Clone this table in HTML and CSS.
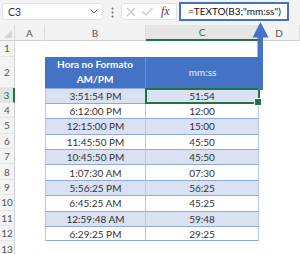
FILE: index.html
```html
<!DOCTYPE html>
<html>
<head>
<meta charset="utf-8">
<link rel="stylesheet" href="styles.css">
</head>
<body>
<div class="app">
  <div class="topbar">
    <div class="namebox">
      <span class="nb-text">C3</span>
      <svg class="chev" width="8" height="5" viewBox="0 0 8 5"><path d="M0.5 0.5 L4 4 L7.5 0.5" fill="none" stroke="#555" stroke-width="1"/></svg>
    </div>
    <svg class="dots" width="3" height="11" viewBox="0 0 3 11"><circle cx="1.5" cy="1.5" r="1" fill="#666"/><circle cx="1.5" cy="5.5" r="1" fill="#666"/><circle cx="1.5" cy="9.5" r="1" fill="#666"/></svg>
    <div class="fxbox">
      <svg class="ico" width="10" height="10" viewBox="0 0 10 10"><path d="M1 1 L9 9 M9 1 L1 9" stroke="#c4c4c4" stroke-width="1.1" fill="none"/></svg>
      <svg class="ico" width="11" height="9" viewBox="0 0 11 9"><path d="M0.5 4.5 L4 8 L10.5 0.8" stroke="#c4c4c4" stroke-width="1.1" fill="none"/></svg>
      <span class="fx">fx</span>
    </div>
    <div class="formula">=TEXTO(B3;"mm:ss")</div>
  </div>

  <div class="sheet">
    <div class="corner"><span class="tri"></span></div>
    <div class="ch">A</div>
    <div class="ch">B</div>
    <div class="ch sel">C</div>
    <div class="ch">D</div>

    <div class="rh">1</div><div class="c"></div><div class="c"></div><div class="c"></div><div class="c"></div>

    <div class="rh">2</div><div class="c"></div>
    <div class="hd hb">Hora no Formato<br>AM/PM</div>
    <div class="hd hc">mm:ss</div>
    <div class="c"></div>

    <div class="rh sel">3</div><div class="c"></div><div class="tb b band">3:51:54 PM</div><div class="tb cc band active">51:54</div><div class="c"></div>
    <div class="rh">4</div><div class="c"></div><div class="tb b">6:12:00 PM</div><div class="tb cc">12:00</div><div class="c"></div>
    <div class="rh">5</div><div class="c"></div><div class="tb b band">12:15:00 PM</div><div class="tb cc band">15:00</div><div class="c"></div>
    <div class="rh">6</div><div class="c"></div><div class="tb b">11:45:50 PM</div><div class="tb cc">45:50</div><div class="c"></div>
    <div class="rh">7</div><div class="c"></div><div class="tb b band">10:45:50 PM</div><div class="tb cc band">45:50</div><div class="c"></div>
    <div class="rh">8</div><div class="c"></div><div class="tb b">1:07:30 AM</div><div class="tb cc">07:30</div><div class="c"></div>
    <div class="rh">9</div><div class="c"></div><div class="tb b band">5:56:25 PM</div><div class="tb cc band">56:25</div><div class="c"></div>
    <div class="rh">10</div><div class="c"></div><div class="tb b">6:45:25 AM</div><div class="tb cc">45:25</div><div class="c"></div>
    <div class="rh">11</div><div class="c"></div><div class="tb b band">12:59:48 AM</div><div class="tb cc band">59:48</div><div class="c"></div>
    <div class="rh">12</div><div class="c"></div><div class="tb b last">6:29:25 PM</div><div class="tb cc last">29:25</div><div class="c"></div>
    <div class="rh">13</div><div class="c"></div><div class="c"></div><div class="c"></div><div class="c"></div>
  </div>

  <svg class="arrow" width="17" height="69" viewBox="0 0 17 69">
    <polygon points="8.5,0 16.5,15.5 0.5,15.5" fill="#4472c4"/>
    <rect x="5.5" y="15" width="5.5" height="53" fill="#4472c4"/>
  </svg>
</div>
</body>
</html>
```

FILE: styles.css
```css
* { box-sizing: border-box; }
html, body { margin: 0; padding: 0; }
body {
  width: 300px;
  height: 254px;
  overflow: hidden;
  background: #ffffff;
  font-family: Lato, "Liberation Sans", sans-serif;
}
.app {
  position: relative;
  width: 300px;
  height: 254px;
  overflow: hidden;
}
.topbar {
  height: 25px;
  background: #f3f3f3;
  display: flex;
  align-items: flex-start;
}
.namebox {
  margin: 3px 0 0 2px;
  width: 101px;
  height: 17px;
  background: #fff;
  border: 1px solid #e2e2e2;
  border-radius: 3px;
  display: flex;
  align-items: center;
  justify-content: space-between;
  padding: 0 4px 0 5px;
}
.nb-text {
  font-size: 10.5px;
  color: #333;
}
.chev { display: block; }
.dots {
  display: block;
  margin: 7px 0 0 8px;
}
.fxbox {
  margin: 3px 0 0 7px;
  width: 56px;
  height: 17px;
  background: #fff;
  border: 1px solid #e2e2e2;
  border-radius: 3px;
  display: flex;
  align-items: center;
  gap: 6px;
  padding-left: 4px;
}
.ico { display: block; }
.fx {
  font-family: "Liberation Serif", serif;
  font-style: italic;
  font-size: 12px;
  color: #444;
  margin-left: 2px;
}
.formula {
  margin: 2px 0 0 2px;
  width: 110px;
  height: 19px;
  background: #fff;
  border: 2.5px solid #4472c4;
  font-size: 10px;
  color: #111;
  padding-left: 7px;
  line-height: 14px;
  white-space: nowrap;
  overflow: hidden;
}
.sheet {
  display: grid;
  grid-template-columns: 15px 30px 101px 113px 41px;
  grid-template-rows: 16px 15.5px 31px repeat(11, 15.4px);
}
.corner {
  background: #f3f3f3;
  border-right: 1px solid #d9d9d9;
  border-bottom: 1px solid #cfcfcf;
  position: relative;
}
.tri {
  position: absolute;
  right: 2px;
  bottom: 2px;
  width: 0;
  height: 0;
  border-left: 8px solid transparent;
  border-bottom: 8px solid #d6d6d6;
}
.ch {
  background: #f3f3f3;
  border-right: 1px solid #dcdcdc;
  border-bottom: 1px solid #cfcfcf;
  font-size: 10px;
  color: #555;
  display: flex;
  align-items: center;
  justify-content: center;
}
.ch.sel {
  background: #e6e6e6;
  color: #217346;
  border-bottom: 2px solid #217346;
}
.rh {
  background: #f3f3f3;
  border-right: 1px solid #d4d4d4;
  border-bottom: 1px solid #e4e4e4;
  font-size: 10px;
  color: #555;
  display: flex;
  align-items: center;
  justify-content: center;
}
.rh.sel {
  background: #e2e2e2;
  color: #217346;
  border-right: 2px solid #217346;
}
.c { background: #fff; }
.hd {
  background: #4472c4;
  color: #fff;
  font-size: 10px;
  line-height: 15px;
  display: flex;
  align-items: center;
  justify-content: center;
  text-align: center;
}
.hb { font-weight: 700; border-right: 1px solid #6f8fcf; }
.hc { font-weight: 400; color: #eef2fa; }
.tb {
  background: #fff;
  border-top: 1px solid #8ea9db;
  font-size: 10px;
  color: #333;
  display: flex;
  align-items: center;
  justify-content: center;
}
.tb.band { background: #d9e1f2; }
.tb.b { border-left: 1px solid #b4c6e7; border-right: 1px solid #b4c6e7; }
.tb.cc { border-right: 1px solid #b4c6e7; }
.tb.last { border-bottom: 1px solid #8ea9db; }
.active { position: relative; }
.active::after {
  content: "";
  position: absolute;
  left: -1px;
  top: -1px;
  right: -2px;
  bottom: -1px;
  border: 2px solid #217346;
}
.active::before {
  content: "";
  position: absolute;
  right: -4px;
  bottom: -3px;
  width: 6px;
  height: 6px;
  background: #217346;
  border: 1px solid #fff;
  z-index: 2;
}
.arrow {
  position: absolute;
  left: 252px;
  top: 22px;
  display: block;
}
```
